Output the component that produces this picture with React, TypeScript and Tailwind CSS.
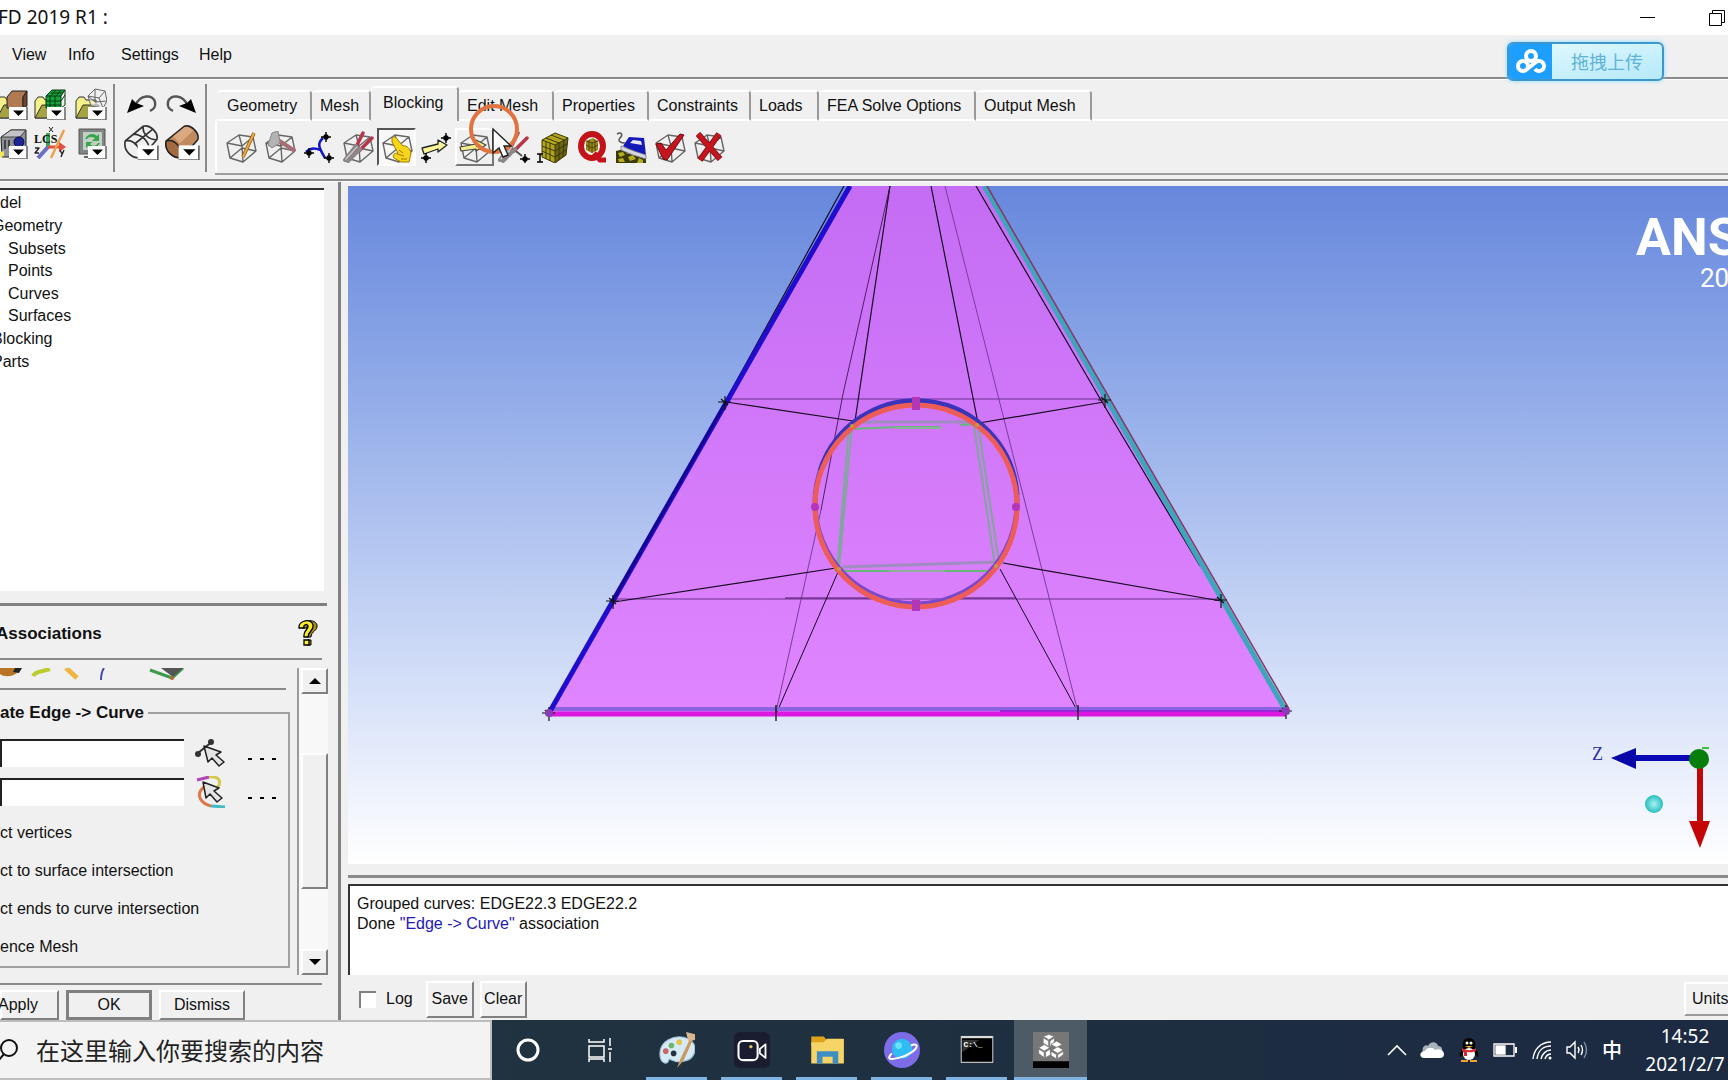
import { useState } from 'react'
import type { ReactNode } from 'react'

const menus = [
  { label: 'View', cls: 'w-[56px]' },
  { label: 'Info', cls: 'w-[53px]' },
  { label: 'Settings', cls: 'w-[78px]' },
  { label: 'Help', cls: 'w-[60px]' },
]

const tabs = [
  { label: 'Geometry', cls: 'w-[95px] pl-[10px]' },
  { label: 'Mesh', cls: 'w-[59px] pl-2' },
  { label: 'Blocking', cls: 'w-[88px] pl-3' },
  { label: 'Edit Mesh', cls: 'w-[95px] pl-2' },
  { label: 'Properties', cls: 'w-[95px] pl-2' },
  { label: 'Constraints', cls: 'w-[102px] pl-2' },
  { label: 'Loads', cls: 'w-[68px] pl-2' },
  { label: 'FEA Solve Options', cls: 'w-[157px] pl-2' },
  { label: 'Output Mesh', cls: 'w-[116px] pl-2' },
]

const tree = [
  { label: 'del', cls: '' },
  { label: 'Geometry', cls: '-ml-2' },
  { label: 'Subsets', cls: 'pl-2' },
  { label: 'Points', cls: 'pl-2' },
  { label: 'Curves', cls: 'pl-2' },
  { label: 'Surfaces', cls: 'pl-2' },
  { label: 'Blocking', cls: '-ml-2' },
  { label: 'Parts', cls: '-ml-2' },
]

const options = ['ct vertices', 'ct to surface intersection', 'ct ends to curve intersection', 'ence Mesh']

function Icon({ children, cls = 'h-8 w-8' }: { children: ReactNode; cls?: string }) {
  return (
    <svg viewBox="0 0 32 32" className={`${cls} shrink-0`} fill="none" strokeLinejoin="round">
      {children}
    </svg>
  )
}

function Wire() {
  return (
    <path
      d="M2 12 14 4 28 6 31 20 18 31 5 27ZM2 12 17 15 28 6M17 15 18 31M5 27 17 17 31 20M14 4 17 15"
      stroke="#666"
      strokeWidth="1.4"
    />
  )
}

function Drop() {
  return (
    <>
      <path d="M13 19H31V32H13Z" fill="#fff" />
      <path d="M31 19V32H13" stroke="#666" strokeWidth="1.5" />
      <path d="M17 22.500H28L22.500 28Z" fill="#000" />
    </>
  )
}

function Folder() {
  return (
    <>
      <path d="M1 30V13L4 9H9L11 12H21V30Z" fill="#f4f08a" stroke="#333" />
      <path d="M1 30 8 17H24V30Z" fill="#a6a344" stroke="#333" />
    </>
  )
}

function Star({ x, y }: { x: number; y: number }) {
  return (
    <g stroke="#000" strokeWidth="1.4">
      <path d={`M${x - 5} ${y}H${x + 5}M${x} ${y - 5}V${y + 5}`} />
      <circle cx={x} cy={y} r="2" fill="#000" />
    </g>
  )
}

function Pliers({ x = 0 }: { x?: number }) {
  return (
    <g strokeLinecap="round">
      <path d={`M${x + 13} 18 ${x + 21} 2M${x + 17} 20 ${x + 30} 7`} stroke="#b5364b" strokeWidth="3.5" />
      <path d={`M${x + 3} 29 ${x + 14} 15M${x + 6} 30 ${x + 18} 18`} stroke="#8b8688" strokeWidth="4" />
      <path d={`M${x + 4} 28 ${x + 15} 16`} stroke="#ccc" strokeWidth="1.2" />
    </g>
  )
}

function GridCube() {
  return (
    <>
      <path d="M5 9 18 2 31 7 29 24 18 32 5 26Z" fill="#b3a51a" />
      <path d="M18 14 31 7 29 24 18 32Z" fill="#6b6410" />
      <path
        d="M5 9 18 2 31 7 29 24 18 32 5 26ZM5 9 18 14 31 7M18 14V32M9 7 22 12V29M14 4 27 9 26 26M9 11V28M13 12V30M5 15 18 20 30 13M5 20 18 26 29 19"
        stroke="#3b3808"
        strokeWidth="1"
      />
    </>
  )
}

const blockingIcons: { name: string; art: ReactNode }[] = [
  {
    name: 'Create Block',
    art: (
      <>
        <Wire />
        <path d="M18 26 29 2" stroke="#8a5a1a" strokeWidth="3.5" />
        <path d="M18 26 29 2" stroke="#eda63c" strokeWidth="2" />
      </>
    ),
  },
  {
    name: 'Split Block',
    art: (
      <>
        <Wire />
        <path d="M14 9 31 20" stroke="#a76d74" strokeWidth="4" />
        <path d="M8 2 14 0 16 12 8 17 4 14Z" fill="#b4b2b3" stroke="#888" />
      </>
    ),
  },
  {
    name: 'Merge Vertices',
    art: (
      <>
        <path d="M20 7C13 13 17 18 22 27M3 21C9 15 15 18 17 19" stroke="#1414c8" strokeWidth="2.500" />
        <Star x={23} y={6} />
        <Star x={6} y={22} />
        <Star x={26} y={27} />
      </>
    ),
  },
  { name: 'Edit Block', art: <><Wire /><Pliers /></> },
  {
    name: 'Associate',
    art: (
      <>
        <Wire />
        <path
          d="M11 7C13 5 15 6 16 8L22 15C26 14 29 18 30 22L28 31H20L13 27C11 24 13 22 17 22L11 11Z"
          fill="#f6d51b"
          stroke="#a07b00"
        />
        <path d="M16 23 23 25M18 19 22 22M20 28 26 28" stroke="#a07b00" />
      </>
    ),
  },
  {
    name: 'Move Vertex',
    art: (
      <>
        <path d="M2 17 18 13V9L27 14 18 21V18L4 23Z" fill="#f7f39b" stroke="#222" strokeWidth="1.3" />
        <Star x={26} y={7} />
        <Star x={6} y={27} />
      </>
    ),
  },
  {
    name: 'Transform Blocks',
    art: (
      <>
        <Wire />
        <path d="M1 16 17 13V9L27 14 17 20V18L2 20Z" fill="#f2ef8c" stroke="#444" strokeWidth="1.2" />
      </>
    ),
  },
  {
    name: 'Edit Edge',
    art: (
      <>
        <path d="M4 9 24 25" stroke="#555" strokeWidth="2" />
        <Pliers x={-1} />
        <Star x={27} y={28} />
      </>
    ),
  },
  {
    name: 'Pre-Mesh Params',
    art: (
      <>
        <GridCube />
        <path d="M0 23H6M3 23V31M0 31H6" stroke="#000" strokeWidth="1.5" />
      </>
    ),
  },
  {
    name: 'Pre-Mesh Quality',
    art: (
      <>
        <ellipse cx="16" cy="15" rx="11" ry="12" stroke="#c4121b" strokeWidth="6" />
        <path d="M10 10 17 7 22 10V19L16 22 10 19Z" fill="#9d8b1a" />
        <path d="M10 10 16 12 22 10M16 12V22M10 14 16 17 22 14M13 9V20M19 9V20" stroke="#4b4509" />
        <path d="M18 22 24 29H30" stroke="#c4121b" strokeWidth="5" />
      </>
    ),
  },
  {
    name: 'Pre-Mesh Smooth',
    art: (
      <>
        <path d="M1 20 17 16 31 24V32H1Z" fill="#3d3a0a" />
        <path d="M3 22 8 21 10 24 5 26ZM11 20 17 18 19 21 12 23ZM3 28 8 27 10 31H4ZM13 26 18 24 21 28 15 30ZM24 27 28 29V32H22Z" fill="#b5ad20" />
        <path d="M8 15 14 6 29 7 31 24 19 21Z" fill="#1418b8" />
        <path d="M15 12 18 9 26 10 27 14Z" fill="#e6e6f4" />
        <path d="M6 15 19 20 31 24V28L18 24 6 19Z" fill="#d8d8e4" stroke="#777" strokeWidth=".8" />
        <path d="M2 3C7 0 8 4 5 7S6 12 10 12" stroke="#555" strokeWidth="1.5" />
      </>
    ),
  },
  {
    name: 'Block Checks',
    art: (
      <>
        <Wire />
        <path d="M2 13 7 12 12 19 26 3 30 4 13 29 9 28Z" fill="#c5161f" stroke="#6d0a0f" />
      </>
    ),
  },
  {
    name: 'Delete Block',
    art: (
      <>
        <Wire />
        <path d="M5 3 27 28M26 3 7 29" stroke="#7d0e15" strokeWidth="6" />
        <path d="M5 3 27 28M26 3 7 29" stroke="#c5161f" strokeWidth="4.5" />
      </>
    ),
  },
]

function FileIcons() {
  return (
    <div className="grid w-[115px] shrink-0 grid-cols-3 content-start gap-y-[7px] border-r-2 border-[#8a8a8a] pt-1">
      <button aria-label="Open geometry" className="-ml-1">
        <Icon>
          <Folder />
          <path d="M11 9 16 3H31L27 9V20H11Z" fill="#b07a52" stroke="#222" />
          <path d="M27 9 31 3V18L27 20Z" fill="#70462a" stroke="#222" />
          <Drop />
        </Icon>
      </button>
      <button aria-label="Open mesh" className="-ml-1">
        <Icon>
          <Folder />
          <path d="M12 8 18 2H31L27 8V20H12Z" fill="#17a33c" />
          <path d="M12 8 18 2H31L27 8V20H12ZM12 8H27M31 2V17L27 20M16 8V20M21 8V20M12 13H27L31 7M12 17H27M17 5H29M22 2 17 8M27 2 22 8" stroke="#063b12" />
          <Drop />
        </Icon>
      </button>
      <button aria-label="Open blocking">
        <Icon>
          <Folder />
          <path d="M13 8 20 1 30 3 32 13 28 20 16 18ZM13 8 24 10 30 3M24 10 28 20M13 8 20 14 32 13M20 1 20 14" stroke="#666" fill="#f0f0f0" fillOpacity=".6" />
          <Drop />
        </Icon>
      </button>
      <button aria-label="Measure" className="-ml-1">
        <Icon>
          <path d="M5 10 15 3H30V24L21 30H6Z" fill="#8d9096" stroke="#222" />
          <path d="M5 10 15 3H30L24 10Z" fill="#c2c4c8" stroke="#444" />
          <circle cx="23" cy="15" r="5" fill="#1d2496" stroke="#0b0d3f" />
          <path d="M9 13V22M13 13V20" stroke="#444" strokeWidth="2" />
          <path d="M0 26 8 24V29L0 32Z" fill="#f0e75c" />
          <Drop />
        </Icon>
      </button>
      <button aria-label="Local coordinate system" className="-ml-1">
        <Icon>
          <path d="M14 20V6" stroke="#3aa55a" strokeWidth="4" />
          <path d="M14 20 4 31" stroke="#6870c4" strokeWidth="4" />
          <path d="M14 20H26" stroke="#e0503c" strokeWidth="3" />
          <path d="M25 15 32 20 25 25Z" fill="#e0503c" />
          <path d="M17 31 30 3" stroke="#efa04a" strokeWidth="2.500" />
          <text x="0" y="16" fill="#111" fontSize="12" fontWeight="700" fontFamily="Liberation Serif, serif">LCS</text>
          <path d="M15 0 19 5M19 0 15 5" stroke="#222" />
          <path d="M1 21H5L1 26H5M26 23 28 27M30 23 27 30" stroke="#222" strokeWidth="1.400" />
        </Icon>
      </button>
      <button aria-label="Refresh">
        <Icon>
          <path d="M4 2H30V27H4Z" fill="#7e8582" stroke="#555" />
          <path d="M8 5H27V23H8Z" fill="#c3cfc5" />
          <path d="M10 12C13 6 19 6 22 9L24 7V14H17L20 11C16 9 13 10 12 12ZM25 16C22 22 16 22 13 19L11 21V15H18L15 17C18 20 21 19 23 16Z" fill="#36a648" />
          <path d="M9 30H18" stroke="#666" strokeWidth="2" />
          <Drop />
        </Icon>
      </button>
    </div>
  )
}

function EditIcons() {
  return (
    <div className="grid w-[92px] shrink-0 grid-cols-2 content-start gap-y-1 border-r-2 border-[#8a8a8a] pt-1 pl-2">
      <button aria-label="Undo" className="pl-1">
        <Icon>
          <path d="M8 18C13 6 26 6 28 14C29 19 27 21 23 23" stroke="#555" strokeWidth="2.500" />
          <path d="M0 25 5 11 9 15 17 18Z" fill="#000" />
        </Icon>
      </button>
      <button aria-label="Redo">
        <Icon>
          <path d="M24 18C19 6 6 6 4 14C3 19 5 21 9 23" stroke="#555" strokeWidth="2.500" />
          <path d="M32 25 27 11 23 15 15 18Z" fill="#000" />
        </Icon>
      </button>
      <button aria-label="Wireframe">
        <Icon cls="h-9 w-9">
          <path d="M2 15 18 2C24 0 32 8 30 14L16 30M2 15C0 24 8 31 16 30C16 22 10 13 2 15ZM9 9C16 9 23 15 23 22M18 2C17 8 22 14 30 14M10 18 26 5" stroke="#333" strokeWidth="1.5" />
          <Drop />
        </Icon>
      </button>
      <button aria-label="Solid">
        <Icon cls="h-9 w-9">
          <path d="M2 15 18 2C24 0 32 8 30 14L16 30C8 31 0 24 2 15Z" fill="#c08a60" stroke="#222" strokeWidth="1.300" />
          <path d="M8 11 18 3C21 2 24 4 26 6L14 17Z" fill="#dba981" />
          <path d="M2 15C10 13 16 21 16 30C8 31 0 24 2 15Z" fill="#a36a42" stroke="#222" strokeWidth="1.300" />
          <Drop />
        </Icon>
      </button>
    </div>
  )
}

function Cursor() {
  return (
    <path d="M0 0V24L6 19 10 28 15 26 11 17 18 17Z" fill="#fff" stroke="#222" strokeWidth="1.4" />
  )
}

function VertexMark({ x, y }: { x: number; y: number }) {
  return <path d={`M${x - 7} ${y}H${x + 6}M${x} ${y - 6}V${y + 8}M${x - 4} ${y - 3}L${x + 3} ${y + 3}`} stroke="#111" strokeWidth="1.2" />
}

function Viewport() {
  return (
    <div className="min-h-0 flex-1 overflow-hidden bg-linear-to-b from-[#6687dc] to-white">
      <svg viewBox="348 186 1380 678" className="h-full w-full" preserveAspectRatio="xMidYMin slice" fill="none">
        <defs>
          <linearGradient id="face" x1="0" y1="0" x2="0" y2="1">
            <stop offset="0" stopColor="#c46df4" />
            <stop offset="1" stopColor="#e085ff" />
          </linearGradient>
          <radialGradient id="ball">
            <stop offset="0" stopColor="#a8f4f0" />
            <stop offset="1" stopColor="#28bdc0" />
          </radialGradient>
        </defs>
        <path d="M850 186H983L1286 712H549Z" fill="url(#face)" />

        {/* hidden edges */}
        <g stroke="#7b3c9c" strokeWidth="1">
          <path d="M728 399H1104M613 599H1221" stroke="#6b3190" />
          <path d="M890 186 843 394 821 510" stroke="#4d2066" />
          <path d="M821 510 776 712M945 186 1078 712" />
        </g>
        <path d="M785 598H870M962 598H1015" stroke="#4d1666" strokeWidth="1" />

        {/* visible block edges */}
        <g stroke="#160820" strokeWidth="1.2">
          <path d="M890 186 855 421M931 186 978 423" />
          <path d="M726 402 853 421M1104 402 979 423M614 602 836 568M1221 601 1003 563" />
          <path d="M838 572 777 712M1000 569 1078 712" strokeWidth="1" />
          <path d="M844 186 726 400M976 186 1102 402 1200 566" />
        </g>

        <path d="M552 709H1286" stroke="#8a62e2" strokeWidth="4" />
        <path d="M549 714H1286" stroke="#dc18e0" strokeWidth="5" />
        <path d="M1000 711H1286" stroke="#9a28d8" strokeWidth="2" />
        <path d="M850 186 549 713" stroke="#1f0ccc" strokeWidth="5" />
        <path d="M726 402 613 600" stroke="#16068f" strokeWidth="3" />
        <path d="M984 186 1286 711" stroke="#3ea6bc" strokeWidth="5" />
        <path d="M987 186 1289 709" stroke="#8b3368" strokeWidth="1.500" />

        {/* inner block */}
        <g stroke="#a08cc0" strokeWidth="3">
          <path d="M853 422H978M842 567 998 562" />
        </g>
        <g stroke="#7fa79a" strokeWidth="2">
          <path d="M852 425 839 568M849 427 837 571M974 426 995 566M978 424 999 562" />
        </g>
        <path d="M850 429 898 427 940 427M960 425 976 424M835 571H890M943 571H995" stroke="#66b878" strokeWidth="2" />
        <path d="M895 428H942M889 571H945" stroke="#8fae9e" strokeWidth="2" />

        <circle cx="916" cy="503" r="101" stroke="#7a48cc" strokeWidth="5" />
        <path d="M820 471A101 101 0 0 1 1017 495" stroke="#3a34bb" strokeWidth="5" />
        <circle cx="916" cy="506" r="101" stroke="#ee5c58" strokeWidth="5" />
        <g fill="#b335b8">
          <path d="M912 397H920V410H912ZM912 600H920V611H912Z" />
          <circle cx="815" cy="507" r="4" />
          <circle cx="1016" cy="507" r="4" />
        </g>
        <g fill="#c79a38">
          <circle cx="852" cy="426" r="2" />
          <circle cx="977" cy="425" r="2" />
          <circle cx="839" cy="569" r="2" />
          <circle cx="996" cy="566" r="2" />
        </g>

        <VertexMark x={725} y={402} />
        <VertexMark x={1105} y={400} />
        <VertexMark x={613} y={601} />
        <VertexMark x={1221} y={600} />
        <VertexMark x={549} y={713} />
        <VertexMark x={1286} y={711} />
        <path d="M776 705V721M1078 705V720" stroke="#111" strokeWidth="1.300" />
        <circle cx="549" cy="713" r="4" fill="#8b3bb4" />
        <circle cx="1286" cy="711" r="4" fill="#8b3bb4" />

        {/* brand */}
        <g fill="#fff" fontFamily="Roboto, sans-serif">
          <text x="1636" y="255" fontSize="52" fontWeight="700">ANS</text>
          <text x="1700" y="287" fontSize="26">20</text>
        </g>

        {/* axis triad */}
        <text x="1592" y="760" fill="#2b2ba8" fontSize="18" fontFamily="Liberation Serif, serif">Z</text>
        <path d="M1634 758H1692" stroke="#0808b4" strokeWidth="6" />
        <path d="M1611 758 1636 748V769Z" fill="#0808a8" />
        <path d="M1700 766V824" stroke="#c00808" strokeWidth="6" />
        <path d="M1689 821H1710L1700 848Z" fill="#c40606" />
        <path d="M1702 748H1709" stroke="#42c042" strokeWidth="2" />
        <circle cx="1699" cy="759" r="10" fill="#077d0b" />
        <circle cx="1654" cy="804" r="9" fill="url(#ball)" />
      </svg>
    </div>
  )
}

function PickRow({ label, children }: { label: string; children: ReactNode }) {
  return (
    <div className="flex h-[28px] items-center">
      <input aria-label={label} className="h-[28px] w-[184px] border-t-2 border-l-2 border-[#222] bg-white px-1 outline-none" />
      <button aria-label={`Pick ${label}`} className="ml-[10px]">{children}</button>
      <button aria-label={`Options for ${label}`} className="ml-[22px] flex gap-[8px] pt-3">
        <span className="h-[2px] w-[4px] bg-black" />
        <span className="h-[2px] w-[4px] bg-black" />
        <span className="h-[2px] w-[4px] bg-black" />
      </button>
    </div>
  )
}

const bevel = 'border-t-2 border-l-2 border-r-2 border-b-2 border-t-white border-l-white border-r-[#808080] border-b-[#808080] bg-[#f0f0f0]'

function Sidebar() {
  return (
    <aside className="flex w-[341px] shrink-0 flex-col overflow-hidden border-r-[3px] border-[#808080] pt-[6px]">
      <div className="mr-[14px] min-h-0 flex-1 border-t-2 border-[#333] bg-white">
        <ul className="mt-[2px] grid h-[181px] leading-5">
          {tree.map((node) => (
            <li key={node.label} className={`${node.cls} flex items-center whitespace-nowrap`}>{node.label}</li>
          ))}
        </ul>
      </div>
      <div className="mt-3 mr-[11px] h-[3px] shrink-0 bg-[#808080]" />

      <div className="mr-4 flex h-[54px] shrink-0 items-center justify-between border-b-2 border-[#8a8a8a]">
        <h2 className="-ml-1 pt-1 text-[17px] font-bold">Associations</h2>
        <button aria-label="Help on associations" className="mr-1">
          <svg viewBox="0 0 20 28" className="h-7 w-5">
            <path d="M4 10C3 2 17 0 19 7C20 13 13 13 13 19H9C8 12 14 11 13 8C12 5 9 7 9 10ZM9 22H13V27H9Z" fill="#a98b1c" stroke="#000" />
            <path d="M1 10C0 2 14 0 15 7C16 13 10 13 10 19H6C5 12 11 11 10 8C9 5 5 7 6 10ZM6 22H11V27H6Z" fill="#f7ec28" stroke="#000" strokeWidth="1.300" />
          </svg>
        </button>
      </div>

      <div className="mt-2 flex h-[307px] shrink-0">
        <div className="w-[290px]">
          <svg viewBox="0 0 200 12" className="h-3 w-[200px]" fill="none">
            <path d="M0 0H20C17 9 5 10 0 6Z" fill="#b77423" />
            <path d="M15 0H22L19 5 13 4Z" fill="#222" />
            <path d="M33 8C36 3 41 4 50 1" stroke="#bccb2d" strokeWidth="4" />
            <path d="M66 0 77 10" stroke="#eeb640" strokeWidth="5" />
            <path d="M104 0C102 3 101 8 101 12" stroke="#4646b8" strokeWidth="2" />
            <path d="M150 2 172 10 183 0" stroke="#3b9b4b" strokeWidth="3" />
            <path d="M161 0H183L173 9Z" fill="#555" />
            <circle cx="172" cy="10" r="2" fill="#bd6438" />
          </svg>
          <div className="mt-2 mr-1 h-[2px] bg-[#8a8a8a]" />
          <fieldset className="mt-[10px] h-[268px] border-t-2 border-r-2 border-b-2 border-[#a0a0a0]">
            <legend className="pr-1 text-[17px] font-bold">ate Edge -&gt; Curve</legend>
            <div className="mt-[13px] space-y-[11px]">
              <PickRow label="edges">
                <Icon>
                  <path d="M4 16 19 4" stroke="#333" strokeWidth="2" />
                  <circle cx="4" cy="17" r="3" fill="#333" />
                  <circle cx="17" cy="5" r="3" fill="#333" />
                  <path d="M10 9 14 25 18 21 25 29 30 25 22 18 27 15Z" fill="#e4e4e4" stroke="#222" strokeWidth="1.500" />
                </Icon>
              </PickRow>
              <PickRow label="curves">
                <Icon>
                  <path d="M3 4 15 1" stroke="#b044b8" strokeWidth="3" />
                  <path d="M15 1C24 0 28 4 24 11" stroke="#d3c94c" strokeWidth="3" />
                  <path d="M10 11C0 19 8 28 17 30" stroke="#dd7947" strokeWidth="3" />
                  <path d="M17 30 31 31" stroke="#3fbcc3" strokeWidth="3" />
                  <path d="M9 6 12 22 16 18 23 26 28 22 20 15 25 12Z" fill="#e4e4e4" stroke="#222" strokeWidth="1.500" />
                </Icon>
              </PickRow>
            </div>
            <div className="mt-2">
              {options.map((o) => (
                <p key={o} className="flex h-[38px] items-center whitespace-nowrap">{o}</p>
              ))}
            </div>
          </fieldset>
        </div>
        <div className="ml-[7px] flex w-[31px] flex-col border-l-2 border-[#9a9a9a] bg-[#f8f8f8] pl-[2px]">
          <button aria-label="Scroll up" className={`flex h-[26px] items-center justify-center ${bevel}`}>
            <svg viewBox="0 0 12 6" className="h-[6px] w-3"><path d="M0 6 6 0 12 6Z" /></svg>
          </button>
          <div className={`mt-[59px] h-[136px] ${bevel}`} />
          <button aria-label="Scroll down" className={`mt-auto flex h-[26px] items-center justify-center ${bevel}`}>
            <svg viewBox="0 0 12 6" className="h-[6px] w-3"><path d="M0 0H12L6 6Z" /></svg>
          </button>
        </div>
      </div>

      <div className="mt-2 mr-4 h-[2px] shrink-0 bg-[#8a8a8a]" />
      <div className="mt-[5px] flex h-[30px] shrink-0 gap-[7px]">
        <button className={`w-[59px] pr-5 ${bevel}`}>
          <span className="-ml-1">Apply</span>
        </button>
        <button className="w-[86px] border-[3px] border-[#808080] bg-[#f0f0f0]">OK</button>
        <button className={`w-[86px] ${bevel}`}>Dismiss</button>
      </div>
    </aside>
  )
}

function Messages() {
  return (
    <>
      <div className="mt-[11px] h-[3px] shrink-0 bg-[#8a8a8a]" />
      <div className="mt-[6px] h-[91px] shrink-0 border-t-2 border-l-2 border-[#333] bg-white pt-2 pl-[7px] leading-5">
        <p>Grouped curves: EDGE22.3 EDGE22.2</p>
        <p>
          Done <span className="text-[#2218b8]">"Edge -&gt; Curve"</span> association
        </p>
      </div>
      <div className="flex h-[45px] shrink-0 items-center pt-[3px]">
        <label className="ml-[11px] flex items-center gap-[10px]">
          <input type="checkbox" className="h-[17px] w-[17px] appearance-none border-t-2 border-l-2 border-[#808080] bg-white" />
          Log
        </label>
        <button className={`ml-[13px] h-[37px] w-[48px] ${bevel}`}>Save</button>
        <button className={`ml-[6px] h-[37px] w-[47px] ${bevel}`}>Clear</button>
        <button className="ml-auto h-[34px] w-[44px] overflow-hidden border-t-2 border-b-2 border-l-2 border-t-white border-b-[#999] border-l-white pl-[6px] text-left whitespace-nowrap">
          Units
        </button>
      </div>
    </>
  )
}

const apps: { name: string; art: ReactNode }[] = [
  {
    name: 'Paint',
    art: (
      <>
        <path d="M1 22C-1 8 14 1 26 6C35 10 34 24 22 26C16 28 12 25 9 24C8 30 2 28 1 22Z" fill="#d6eaf6" stroke="#9dc0d8" />
        <circle cx="13" cy="19" r="2.500" fill="#22343e" />
        <circle cx="6" cy="17" r="2.500" fill="#c9666b" />
        <circle cx="11" cy="12" r="2.500" fill="#6fb46c" />
        <circle cx="18" cy="9" r="2.500" fill="#e4c34f" />
        <path d="M28 5 19 24 16 32 22 25 30 7Z" fill="#c9995f" />
        <path d="M24 0 32 2 32 7 26 8Z" fill="#d9b690" />
      </>
    ),
  },
  {
    name: 'Recorder',
    art: (
      <>
        <rect width="32" height="32" rx="5" fill="#1a1d30" />
        <rect x="4" y="8" width="17" height="17" rx="4" stroke="#fff" strokeWidth="1.800" />
        <path d="M23 15 28 11V23L23 19Z" stroke="#fff" strokeWidth="1.600" />
        <circle cx="15" cy="13" r="1.500" fill="#d8cf5a" />
      </>
    ),
  },
  {
    name: 'File Explorer',
    art: (
      <>
        <path d="M2 4H13L16 7V12H2Z" fill="#e0a21a" />
        <path d="M2 9H13L16 6H31V28H2Z" fill="#f6d468" />
        <path d="M7 28V17H26V28H21V22H12V28Z" fill="#3f8ec2" />
      </>
    ),
  },
  {
    name: 'Browser',
    art: (
      <>
        <circle cx="16" cy="16" r="16" fill="#7c6ce8" />
        <circle cx="16" cy="15" r="9" fill="#2fbcf4" />
        <path d="M7 19C2 24 5 25 13 23C22 21 30 15 29 12C28 11 26 11 24 12" stroke="#fff" strokeWidth="1.800" />
        <circle cx="13" cy="12" r="3" fill="#69e2f7" />
      </>
    ),
  },
  {
    name: 'Command Prompt',
    art: (
      <>
        <path d="M2 4H30V27H2Z" fill="#000" stroke="#bbb" strokeWidth="1" />
        <path d="M2 4.500H30" stroke="#ddd" strokeWidth="2" />
        <path d="M3 18 18 7H3Z" fill="#333" />
        <text x="4" y="13" fill="#fff" fontSize="7" fontWeight="700" fontFamily="Liberation Mono, monospace">C:\_</text>
      </>
    ),
  },
  {
    name: 'ICEM CFD',
    art: (
      <>
        <path d="M0 0H32V26H0Z" fill="#777" />
        <path d="M0 26H32V32H0Z" fill="#000" />
        <g fill="#fff" stroke="#777" strokeWidth=".8">
          <path d="M14 2 19 4 14 7 9 4ZM9 5 14 8V13L9 10ZM15 8 19 5V10L15 13Z" />
          <path d="M21 8 26 11 21 14 16 11Z" />
          <path d="M10 11 15 14 10 17 5 14ZM5 15 10 18V23L5 19ZM11 18 15 15 16 20 11 23Z" />
          <path d="M22 13 27 16 22 19 17 16ZM16 17 21 20V24L16 21ZM22 20 27 17V20L22 24Z" />
        </g>
      </>
    ),
  },
]

function Taskbar() {
  return (
    <footer className="flex h-[60px] shrink-0 overflow-hidden bg-linear-to-r from-[#22363f] to-[#1c2a42] text-white">
      <label className="flex w-[492px] shrink-0 items-center border-t-2 border-r-2 border-b-2 border-[#bdbdbd] bg-[#f3f3f3]">
        <svg viewBox="0 0 20 24" className="-ml-[1px] h-6 w-5 shrink-0" fill="none" stroke="#111" strokeWidth="2">
          <circle cx="10" cy="10" r="8" />
          <path d="M5 16 0 22" />
        </svg>
        <input
          aria-label="Search"
          placeholder="在这里输入你要搜索的内容"
          className="ml-[17px] w-[400px] bg-transparent font-['Noto_Sans_CJK_SC',sans-serif] text-[24px] text-black outline-none placeholder:text-[#222]"
        />
      </label>
      <button aria-label="Cortana" className="flex w-[72px] items-center justify-center">
        <svg viewBox="0 0 24 24" className="h-6 w-6"><circle cx="12" cy="12" r="10" fill="none" stroke="#fff" strokeWidth="3" /></svg>
      </button>
      <button aria-label="Task View" className="flex w-[72px] items-center justify-center">
        <svg viewBox="0 0 26 26" className="h-[26px] w-[26px]" fill="none" stroke="#fff" strokeWidth="1.500">
          <path d="M2 2V5H17V2M2 9H17V20H2ZM2 25V22H17V25M23 1V9M23 15V25M21 12H25" />
        </svg>
      </button>
      <div className="ml-[3px] flex">
        {apps.map((app, i) => (
          <button
            key={app.name}
            aria-label={app.name}
            className={`flex flex-col items-center justify-between pt-3 ${i === 5 ? 'w-[73px] bg-[#4d5b67]' : 'w-[75px]'}`}
          >
            <Icon cls="h-9 w-9">{app.art}</Icon>
            <span className={`h-[3px] bg-[#7fb4e2] ${i === 5 ? 'w-full' : 'w-[61px]'}`} />
          </button>
        ))}
      </div>

      <div className="ml-auto flex items-center">
        <svg viewBox="0 0 20 12" className="h-3 w-5" fill="none" stroke="#fff" strokeWidth="1.600"><path d="M1 11 10 2 19 11" /></svg>
        <svg viewBox="0 0 24 16" className="ml-[13px] h-4 w-6">
          <path d="M3 10C1 5 6 2 8 4C10-1 17-1 18 4C21 4 23 6 22 10Z" fill="#a9b1ba" />
          <path d="M4 16C-1 16-1 9 5 9C7 5 13 5 15 8C20 6 24 9 24 12C24 15 22 16 20 16Z" fill="#fff" />
        </svg>
        <svg viewBox="0 0 20 24" className="ml-[15px] h-6 w-5">
          <path d="M10 0C4 0 3 6 4 9C1 14 0 17 1 19L4 17H16L19 19C20 17 19 14 16 9C17 6 16 0 10 0Z" fill="#060606" />
          <ellipse cx="10" cy="16" rx="6" ry="6" fill="#fff" />
          <circle cx="8" cy="5" r="1.500" fill="#fff" />
          <circle cx="12" cy="5" r="1.500" fill="#fff" />
          <path d="M6 8H14L10 10Z" fill="#eda52c" />
          <path d="M3 10C8 13 12 13 17 10V13C12 15 10 14 8 14V18H5V14L3 13Z" fill="#d92a33" />
          <path d="M2 22H9V24H2ZM11 22H18V24H11Z" fill="#eda52c" />
        </svg>
        <svg viewBox="0 0 24 14" className="ml-[14px] h-[14px] w-6" fill="none" stroke="#fff" strokeWidth="1.300">
          <path d="M1 1H21V13H1Z" />
          <path d="M3 3H12V11H3Z" fill="#fff" />
          <path d="M23 4V10" strokeWidth="2" />
        </svg>
        <svg viewBox="0 0 20 20" className="ml-[15px] h-5 w-5" fill="none" stroke="#fff" strokeWidth="1.400">
          <path d="M1 19C2 9 9 2 19 2M5 19C6 11 11 6 19 6M9 19C10 14 14 10 19 10M13 19C14 16 16 14 19 14" />
          <circle cx="18" cy="18" r="1.500" fill="#fff" stroke="none" />
        </svg>
        <svg viewBox="0 0 24 20" className="ml-[14px] h-5 w-6" fill="none" stroke="#fff" strokeWidth="1.400">
          <path d="M1 7H4L9 2V18L4 13H1Z" />
          <path d="M12 7Q14 10 12 13M15 5Q18 10 15 15" />
          <path d="M18 2Q23 10 18 18" stroke="#8390a0" />
        </svg>
        <span className="ml-[12px] font-['Noto_Sans_CJK_SC',sans-serif] text-[20px] font-medium">中</span>
        <div className="ml-[20px] w-[86px] text-center font-['Noto_Sans',sans-serif] text-[19px] leading-7">
          <div>14:52</div>
          <div>2021/2/7</div>
        </div>
      </div>
    </footer>
  )
}

export default function App() {
  const [activeTab, setActiveTab] = useState('Blocking')

  return (
    <div className="relative flex h-screen flex-col overflow-hidden bg-[#f0f0f0] font-['Liberation_Sans',Arial,sans-serif] text-[16px] text-[#111]">
      <header className="flex h-[35px] shrink-0 items-center bg-white">
        <h1 className="-ml-[2px] font-['Noto_Sans',sans-serif] text-[19px]">FD 2019 R1 :</h1>
        <button aria-label="Minimize" className="ml-auto flex h-full w-[69px] items-center">
          <span className="h-[1px] w-[15px] bg-black" />
        </button>
        <button aria-label="Restore" className="mr-[3px]">
          <svg viewBox="0 0 16 16" className="h-4 w-4" fill="none" stroke="#000"><path d="M.5 3.500H12.500V15.500H.5ZM3.500 3.500V.5H15.500V12.500H12.500" /></svg>
        </button>
      </header>

      <nav className="flex h-[44px] shrink-0 border-b-2 border-[#8a8a8a] pb-[3px] pl-3">
        {menus.map((m) => (
          <button key={m.label} className={`text-left ${m.cls}`}>{m.label}</button>
        ))}
      </nav>

      <div className="flex h-[96px] shrink-0 border-t border-white">
        <div className="flex h-[92px] shrink-0 pt-1">
          <FileIcons />
          <EditIcons />
        </div>
        <div className="ml-2 flex min-w-0 flex-1 flex-col border-b-2 border-[#a09ca0]">
          <div role="tablist" className="mt-[6px] flex h-[35px] items-end pl-[2px]">
            {tabs.map((tab) => (
              <button
                key={tab.label}
                role="tab"
                aria-selected={tab.label === activeTab}
                onClick={() => setActiveTab(tab.label)}
                className={`shrink-0 rounded-t-[4px] border-t-2 border-r-2 border-t-white border-r-[#999] text-left whitespace-nowrap ${tab.cls} ${
                  tab.label === activeTab ? 'h-[35px] pb-1' : 'h-[31px] border-b-2 border-b-white'
                }`}
              >
                {tab.label}
              </button>
            ))}
            <div className="flex-1 border-b-2 border-white" />
          </div>
          <div className="flex flex-1 items-start border-l-2 border-white pt-[7px] pl-1">
            {blockingIcons.map((icon) => (
              <button
                key={icon.name}
                aria-label={icon.name}
                className={`flex h-[38px] w-[39px] items-center justify-center border-2 ${
                  icon.name === 'Associate'
                    ? 'border-t-[#555] border-r-white border-b-white border-l-[#555] bg-[#f8f8f8]'
                    : icon.name === 'Transform Blocks'
                      ? 'border-t-white border-r-[#777] border-b-[#777] border-l-white'
                      : 'border-transparent'
                }`}
              >
                <Icon>{icon.art}</Icon>
              </button>
            ))}
          </div>
        </div>
      </div>

      <div className="mt-1 flex min-h-0 flex-1 flex-col border-t-2 border-[#8a8a8a]">
        <div className="flex min-h-0 flex-1 border-t border-white">
          <Sidebar />
          <main className="ml-[7px] flex min-w-0 flex-1 flex-col pt-1">
            <Viewport />
            <Messages />
          </main>
        </div>
      </div>

      <Taskbar />

      {/* floating upload widget */}
      <button className="absolute top-[42px] right-[64px] flex h-[39px] w-[157px] overflow-hidden rounded-md border-2 border-[#3d96cc] bg-linear-to-br from-[#e4fbff] to-[#b5e9fb] shadow-[0_0_4px_#7fdcff]">
        <span className="flex h-full w-[43px] items-center justify-center bg-[#1e9fff]">
          <svg viewBox="0 0 30 26" className="h-[26px] w-[30px]" fill="none" stroke="#fff" strokeWidth="4">
            <circle cx="15" cy="7" r="5" />
            <circle cx="7" cy="17" r="5" />
            <path d="M11 20 20 13A5 5 0 1 1 19 20" />
          </svg>
        </span>
        <span className="flex h-full flex-1 items-center justify-center font-['Noto_Sans_CJK_SC',sans-serif] text-[18px] text-[#62b2d8]">
          拖拽上传
        </span>
      </button>

      {/* pointer with click highlight */}
      <svg viewBox="0 0 60 70" className="pointer-events-none absolute top-[99px] left-[464px] h-[70px] w-[60px]" fill="none">
        <circle cx="30" cy="30" r="23" stroke="#e07440" strokeWidth="4" />
        <g transform="translate(29 30)"><Cursor /></g>
      </svg>
    </div>
  )
}
